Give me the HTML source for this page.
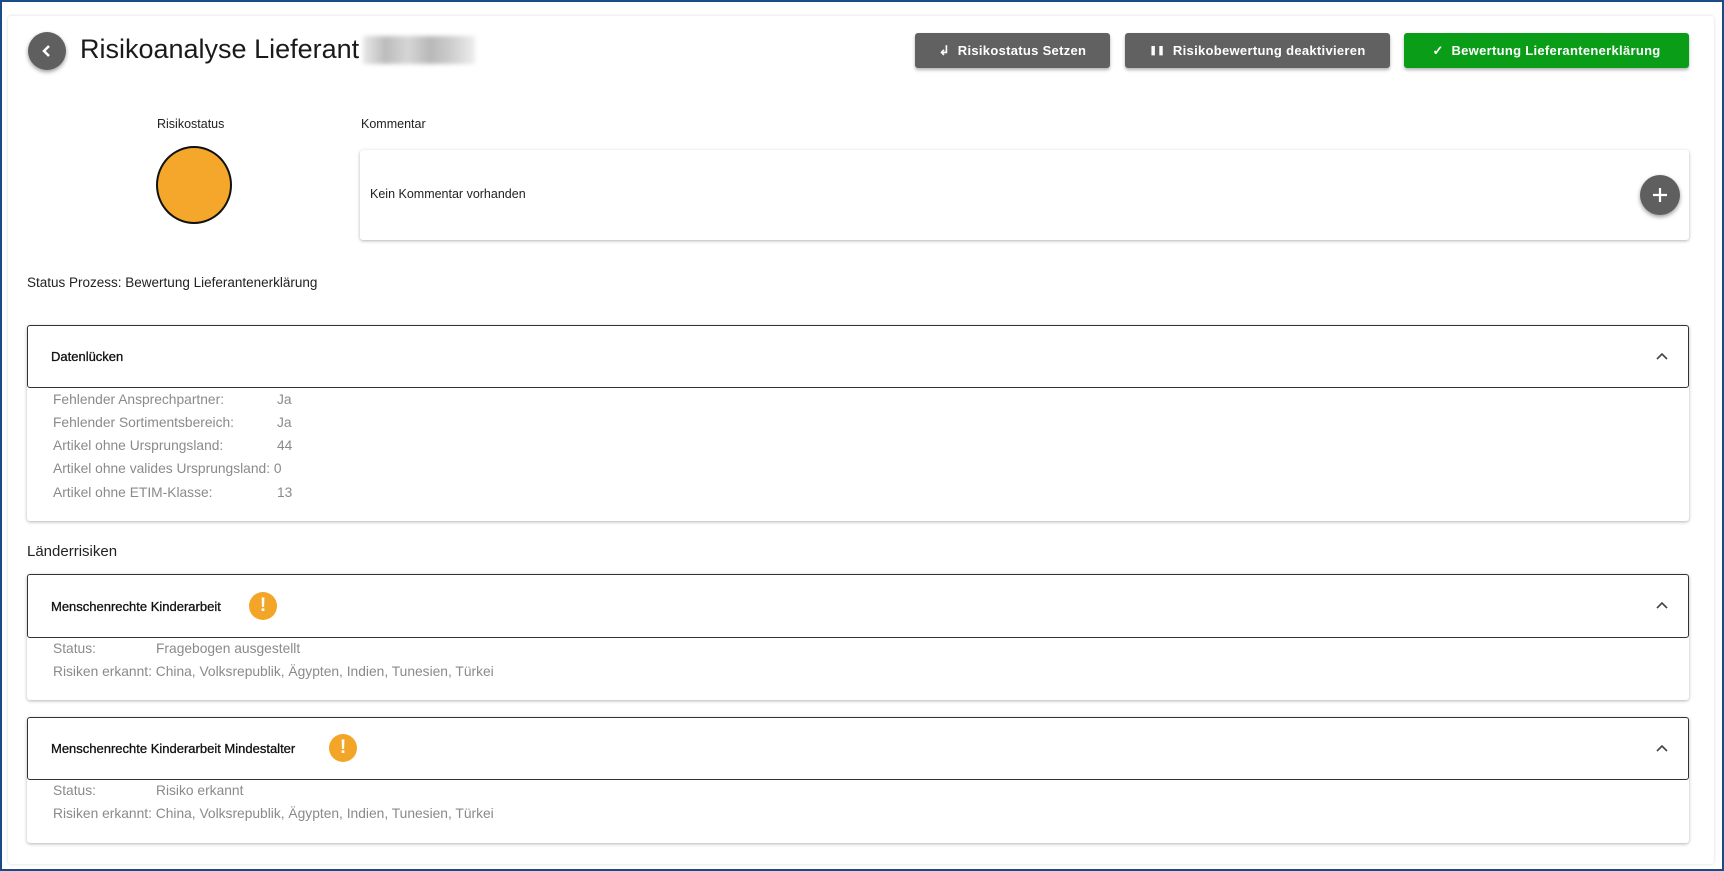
<!DOCTYPE html>
<html><head><meta charset="utf-8"><style>
*{box-sizing:border-box;margin:0;padding:0}
body{width:1724px;height:871px;background:#fff;font-family:"Liberation Sans",sans-serif;position:relative;overflow:hidden;color:#222}
.frame{position:absolute;left:0;top:0;width:1724px;height:871px;border:2px solid #1b4a86}
.inner{position:absolute;left:8px;top:16px;width:1706px;height:848px;background:#fff;box-shadow:0 0 3px rgba(0,0,0,.15);border-radius:3px}
.abs{position:absolute}
.back{left:28px;top:32px;width:38px;height:38px;border-radius:50%;background:#5f5f5f;box-shadow:0 2px 4px rgba(0,0,0,.4)}
.title{left:80px;top:34px;font-size:27px;color:#1a1a1a}
.blur{left:363px;top:36px;width:112px;height:28px;background:linear-gradient(90deg,#e8e8e8,#bcbcbc 20%,#d6d6d6 40%,#b8b8b8 60%,#cfcfcf 80%,#eee);filter:blur(2px)}
.btn{top:33px;height:35px;border-radius:3px;color:#fff;font-weight:bold;font-size:13px;display:flex;align-items:center;justify-content:center;box-shadow:0 2px 3px rgba(0,0,0,.3);letter-spacing:.3px}
.gray{background:#616161}.green{background:#0a9e18}
.lbl{font-size:12.5px;color:#222}
.card{background:#fff;box-shadow:0 1px 3px rgba(0,0,0,.3);border-radius:3px}
.hdr{position:absolute;left:0;right:0;top:0;border:1px solid #333;border-radius:3px;background:#fff;font-size:13px;color:#111;display:flex;align-items:center;padding-left:23px;-webkit-text-stroke:.3px #111}
.row{position:absolute;font-size:13.8px;color:#8a8a8a}
.warn{position:absolute;width:28px;height:28px;border-radius:50%;background:#f2a526;color:#fff;font-weight:bold;font-size:19px;text-align:center;line-height:28px}
.chev{position:absolute;right:20px;top:50%;margin-top:-6px}
</style></head><body>
<div class="frame"></div>
<div class="inner"></div>
<div class="abs back"><svg width="38" height="38"><path d="M21 14l-5 5 5 5" stroke="#fff" stroke-width="2.5" fill="none"/></svg></div>
<div class="abs title">Risikoanalyse Lieferant</div>
<div class="abs blur"></div>
<div class="abs btn gray" style="left:915px;width:195px">↲&nbsp;&nbsp;Risikostatus Setzen</div>
<div class="abs btn gray" style="left:1125px;width:265px"><span style="font-size:9px">❚❚</span>&nbsp;&nbsp;Risikobewertung deaktivieren</div>
<div class="abs btn green" style="left:1404px;width:285px">✓&nbsp;&nbsp;Bewertung Lieferantenerklärung</div>
<div class="abs lbl" style="left:157px;top:117px">Risikostatus</div>
<div class="abs" style="left:156px;top:146px;width:76px;height:78px;border-radius:50%;background:#f4a72a;border:2px solid #111"></div>
<div class="abs lbl" style="left:361px;top:117px">Kommentar</div>
<div class="abs card" style="left:360px;top:150px;width:1329px;height:90px"></div>
<div class="abs lbl" style="left:370px;top:187px">Kein Kommentar vorhanden</div>
<div class="abs" style="left:1640px;top:175px;width:40px;height:40px;border-radius:50%;background:#5f5f5f;box-shadow:0 2px 4px rgba(0,0,0,.4)"><svg width="40" height="40"><path d="M20 13v14M13 20h14" stroke="#fff" stroke-width="2.2"/></svg></div>
<div class="abs lbl" style="left:27px;top:275px;font-size:13.5px">Status Prozess: Bewertung Lieferantenerklärung</div>

<div class="abs card" style="left:27px;top:325px;width:1662px;height:196px">
<div class="hdr" style="height:63px">Datenlücken<svg class="chev" width="12" height="12"><path d="M1 8l5-5 5 5" stroke="#444" stroke-width="1.6" fill="none"/></svg></div>
</div>
<div class="row" style="left:53px;top:392px">Fehlender Ansprechpartner:</div><div class="row" style="left:277px;top:392px">Ja</div>
<div class="row" style="left:53px;top:415px">Fehlender Sortimentsbereich:</div><div class="row" style="left:277px;top:415px">Ja</div>
<div class="row" style="left:53px;top:438px">Artikel ohne Ursprungsland:</div><div class="row" style="left:277px;top:438px">44</div>
<div class="row" style="left:53px;top:461px">Artikel ohne valides Ursprungsland: 0</div>
<div class="row" style="left:53px;top:485px">Artikel ohne ETIM-Klasse:</div><div class="row" style="left:277px;top:485px">13</div>

<div class="abs" style="left:27px;top:543px;font-size:15px;color:#222">Länderrisiken</div>

<div class="abs card" style="left:27px;top:574px;width:1662px;height:126px">
<div class="hdr" style="height:64px">Menschenrechte Kinderarbeit<svg class="chev" width="12" height="12"><path d="M1 8l5-5 5 5" stroke="#444" stroke-width="1.6" fill="none"/></svg></div>
</div>
<div class="warn" style="left:249px;top:592px">!</div>
<div class="row" style="left:53px;top:641px">Status:</div><div class="row" style="left:156px;top:641px">Fragebogen ausgestellt</div>
<div class="row" style="left:53px;top:664px">Risiken erkannt: China, Volksrepublik, Ägypten, Indien, Tunesien, Türkei</div>

<div class="abs card" style="left:27px;top:717px;width:1662px;height:126px">
<div class="hdr" style="height:63px">Menschenrechte Kinderarbeit Mindestalter<svg class="chev" width="12" height="12"><path d="M1 8l5-5 5 5" stroke="#444" stroke-width="1.6" fill="none"/></svg></div>
</div>
<div class="warn" style="left:329px;top:734px">!</div>
<div class="row" style="left:53px;top:783px">Status:</div><div class="row" style="left:156px;top:783px">Risiko erkannt</div>
<div class="row" style="left:53px;top:806px">Risiken erkannt: China, Volksrepublik, Ägypten, Indien, Tunesien, Türkei</div>
</body></html>
